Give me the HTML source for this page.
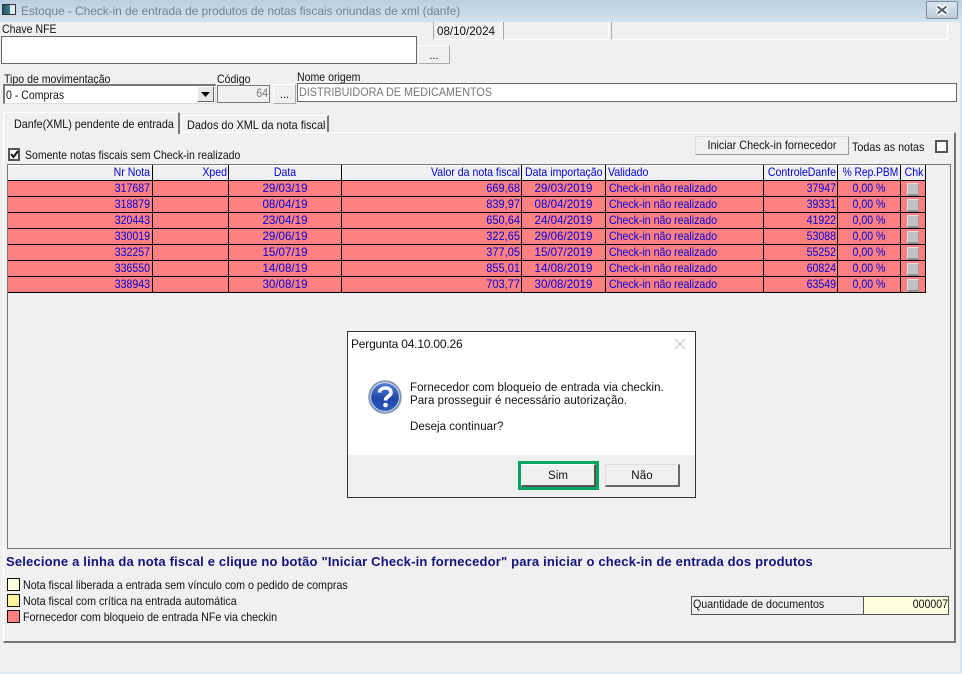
<!DOCTYPE html>
<html lang="pt"><head><meta charset="utf-8"><title>Estoque</title>
<style>
html,body{margin:0;padding:0;background:#f0f0f0}
#r{position:relative;width:962px;height:674px;overflow:hidden;background:#f0f0f0;font:12px "Liberation Sans",sans-serif;color:#111}
#r div{position:absolute;box-sizing:border-box}
.t,.c{white-space:nowrap;transform:scaleX(var(--s,.88));transform-origin:0 50%}
.t{line-height:14px;height:14px}
.c{color:#0000e0;line-height:15px;height:15px}
.ra{transform-origin:100% 50%;text-align:right}
.ce{transform-origin:50% 50%;text-align:center}
.d{--s:.965}
.n{--s:.92}
.bv{background:#fff;border:1px solid #666}
.btn{background:#f0f0f0;border:1px solid;border-color:#fff #888 #888 #fff;text-align:center;font-size:11px}
.l{background:#000}
.chk{width:12px;height:13px;background:#c0c0c0;border-bottom:2px solid #8e8e8e;border-right:1px solid #9a9a9a;border-top:1px solid #ddd;border-left:1px solid #ddd}
</style></head><body><div id="r">

<div style="left:0;top:0;width:962px;height:22px;background:linear-gradient(#b9cfe2,#d2e3f1)"></div>
<div style="left:960px;top:22px;width:2px;height:652px;background:#d2e3f1"></div>
<div style="left:0;top:672px;width:962px;height:2px;background:#dfeaf3"></div>
<div style="left:2px;top:4px;width:14px;height:11px;background:linear-gradient(90deg,#1d5c6e,#3a7c8c 60%,#dfe9ee 60%);border:1px solid #333"></div>
<div class="t" style="--s:1;left:21px;top:4px;font-size:12px;color:#7a8288;letter-spacing:-.07px">Estoque - Check-in de entrada de produtos de notas fiscais oriundas de xml (danfe)</div>
<div style="left:926px;top:1px;width:32px;height:18px;background:linear-gradient(#dbe6f0,#b9cbdc);border:1px solid #7d8ea0;border-radius:2px"></div>
<svg style="position:absolute;left:934px;top:4px" width="16" height="12"><path d="M3 2 L13 10 M13 2 L3 10" stroke="#fff" stroke-width="5"/><path d="M3.5 2.5 L12.5 9.5 M12.5 2.5 L3.5 9.5" stroke="#56606a" stroke-width="2"/></svg>

<div class="t" style="left:2px;top:22px">Chave NFE</div>
<div class="bv" style="left:1px;top:36px;width:416px;height:28px"></div>
<div class="btn" style="left:418px;top:45px;width:32px;height:19px;line-height:20px;border-color:#fff #aaa #aaa #fff">...</div>

<div style="left:433px;top:22px;width:68px;height:18px;border-left:1px solid #aaa;border-right:1px solid #fff;border-bottom:1px solid #fff"></div>
<div class="t d" style="left:437px;top:24px">08/10/2024</div>
<div style="left:503px;top:22px;width:106px;height:18px;border-left:1px solid #aaa;border-right:1px solid #fff;border-bottom:1px solid #fff"></div>
<div style="left:611px;top:22px;width:337px;height:18px;border-left:1px solid #aaa;border-right:1px solid #fff;border-bottom:1px solid #fff"></div>

<div class="t" style="left:4px;top:72px">Tipo de movimentação</div>
<div style="left:3px;top:84px;width:213px;height:20px;background:#fff;border:1px solid #777;border-top:2px solid #777;border-left:2px solid #777;border-bottom:1px solid #ddd;border-right:1px solid #ddd"></div>
<div class="t" style="left:6px;top:88px">0 - Compras</div>
<div style="left:197px;top:86px;width:17px;height:16px;background:#e8e8e8;border:1px solid;border-color:#fff #666 #666 #fff"></div>
<svg style="position:absolute;left:201px;top:92px" width="10" height="5"><path d="M0 0H9L4.5 5Z" fill="#000"/></svg>

<div class="t" style="left:217px;top:72px">Código</div>
<div style="left:217px;top:85px;width:53px;height:18px;background:#f0f0f0;border:1px solid #777"></div>
<div class="t ra" style="left:219px;top:86px;width:49px;color:#777">64</div>
<div class="btn" style="left:273px;top:84px;width:23px;height:20px;line-height:21px;border-color:#fff #aaa #aaa #fff">...</div>
<div class="t" style="left:297px;top:70px">Nome origem</div>
<div style="left:297px;top:83px;width:660px;height:19px;background:#fff;border:1px solid #666"></div>
<div class="t" style="--s:.9;left:299px;top:85px;color:#777">DISTRIBUIDORA DE MEDICAMENTOS</div>

<!-- tab page -->
<div style="left:3px;top:132px;width:953px;height:511px;border:1px solid;border-color:#fff #777 #777 #fff;border-width:1px 2px 2px 1px"></div>
<div style="left:3px;top:112px;width:177px;height:22px;background:#f0f0f0;border-top:1px solid #fff;border-left:1px solid #fff;border-right:2px solid #777;border-radius:2px 2px 0 0"></div>
<div class="t" style="--s:.894;left:14px;top:117px">Danfe(XML) pendente de entrada</div>
<div style="left:181px;top:115px;width:148px;height:17px;border-top:1px solid #fff;border-left:1px solid #fff;border-right:2px solid #777"></div>
<div class="t" style="--s:.905;left:187px;top:118px">Dados do XML da nota fiscal</div>

<div style="left:8px;top:148px;width:12px;height:13px;background:#fff;border:2px solid #555"></div>
<svg style="position:absolute;left:9px;top:149px" width="11" height="11"><path d="M2 5 L4.5 8 L9 2" fill="none" stroke="#111" stroke-width="2"/></svg>
<div class="t" style="--s:.875;left:25px;top:148px">Somente notas fiscais sem Check-in realizado</div>

<div class="btn" style="left:695px;top:136px;width:154px;height:19px;background:#f0f0f0;border-color:#ddd #999 #999 #ddd"></div>
<div class="t ce" style="--s:.9;left:695px;top:138px;width:154px">Iniciar Check-in fornecedor</div>
<div class="t" style="--s:.897;left:852px;top:140px">Todas as notas</div>
<div style="left:935px;top:140px;width:13px;height:13px;background:#fff;border:2px solid #555"></div>

<!-- grid -->
<div style="left:7px;top:164px;width:944px;height:385px;border:1px solid #777;background:#f0f0f0"></div>
<div style="left:8px;top:165px;width:918px;height:1px;background:#fff"></div>
<div style="left:8px;top:181px;width:918px;height:112px;background:#ff8080"></div>

<div class="l" style="left:8px;top:180px;width:918px;height:1px"></div>
<div class="l" style="left:8px;top:196px;width:918px;height:1px"></div>
<div class="l" style="left:8px;top:212px;width:918px;height:1px"></div>
<div class="l" style="left:8px;top:228px;width:918px;height:1px"></div>
<div class="l" style="left:8px;top:244px;width:918px;height:1px"></div>
<div class="l" style="left:8px;top:260px;width:918px;height:1px"></div>
<div class="l" style="left:8px;top:276px;width:918px;height:1px"></div>
<div class="l" style="left:8px;top:292px;width:918px;height:1px"></div>

<div class="l" style="left:152px;top:165px;width:1px;height:128px"></div>
<div class="l" style="left:228px;top:165px;width:1px;height:128px"></div>
<div class="l" style="left:341px;top:165px;width:1px;height:128px"></div>
<div class="l" style="left:521px;top:165px;width:1px;height:128px"></div>
<div class="l" style="left:605px;top:165px;width:1px;height:128px"></div>
<div class="l" style="left:763px;top:165px;width:1px;height:128px"></div>
<div class="l" style="left:837px;top:165px;width:1px;height:128px"></div>
<div class="l" style="left:900px;top:165px;width:1px;height:128px"></div>
<div class="l" style="left:925px;top:165px;width:1px;height:128px"></div>

<div class="c ra" style="left:8px;top:165px;width:142px">Nr Nota</div>
<div class="c ra" style="left:153px;top:165px;width:74px">Xped</div>
<div class="c ce" style="left:229px;top:165px;width:112px">Data</div>
<div class="c ra" style="left:342px;top:165px;width:178px">Valor da nota fiscal</div>
<div class="c" style="left:525px;top:165px">Data importação</div>
<div class="c" style="left:608px;top:165px">Validado</div>
<div class="c ra" style="left:736px;top:165px;width:100px">ControleDanfe</div>
<div class="c ce" style="--s:.85;left:838px;top:165px;width:62px">% Rep.PBM</div>
<div class="c ce" style="left:902px;top:165px;width:24px">Chk</div>

<div class="c ra" style="left:8px;top:181px;width:142px">317687</div><div class="c ce d" style="left:229px;top:181px;width:112px">29/03/19</div><div class="c ra n" style="left:342px;top:181px;width:178px">669,68</div><div class="c ce d" style="left:522px;top:181px;width:83px">29/03/2019</div><div class="c" style="left:609px;top:181px">Check-in não realizado</div><div class="c ra" style="left:764px;top:181px;width:72px">37947</div><div class="c ce" style="left:838px;top:181px;width:62px">0,00 %</div><div class="chk" style="left:907px;top:183px"></div>
<div class="c ra" style="left:8px;top:197px;width:142px">318879</div><div class="c ce d" style="left:229px;top:197px;width:112px">08/04/19</div><div class="c ra n" style="left:342px;top:197px;width:178px">839,97</div><div class="c ce d" style="left:522px;top:197px;width:83px">08/04/2019</div><div class="c" style="left:609px;top:197px">Check-in não realizado</div><div class="c ra" style="left:764px;top:197px;width:72px">39331</div><div class="c ce" style="left:838px;top:197px;width:62px">0,00 %</div><div class="chk" style="left:907px;top:199px"></div>
<div class="c ra" style="left:8px;top:213px;width:142px">320443</div><div class="c ce d" style="left:229px;top:213px;width:112px">23/04/19</div><div class="c ra n" style="left:342px;top:213px;width:178px">650,64</div><div class="c ce d" style="left:522px;top:213px;width:83px">24/04/2019</div><div class="c" style="left:609px;top:213px">Check-in não realizado</div><div class="c ra" style="left:764px;top:213px;width:72px">41922</div><div class="c ce" style="left:838px;top:213px;width:62px">0,00 %</div><div class="chk" style="left:907px;top:215px"></div>
<div class="c ra" style="left:8px;top:229px;width:142px">330019</div><div class="c ce d" style="left:229px;top:229px;width:112px">29/06/19</div><div class="c ra n" style="left:342px;top:229px;width:178px">322,65</div><div class="c ce d" style="left:522px;top:229px;width:83px">29/06/2019</div><div class="c" style="left:609px;top:229px">Check-in não realizado</div><div class="c ra" style="left:764px;top:229px;width:72px">53088</div><div class="c ce" style="left:838px;top:229px;width:62px">0,00 %</div><div class="chk" style="left:907px;top:231px"></div>
<div class="c ra" style="left:8px;top:245px;width:142px">332257</div><div class="c ce d" style="left:229px;top:245px;width:112px">15/07/19</div><div class="c ra n" style="left:342px;top:245px;width:178px">377,05</div><div class="c ce d" style="left:522px;top:245px;width:83px">15/07/2019</div><div class="c" style="left:609px;top:245px">Check-in não realizado</div><div class="c ra" style="left:764px;top:245px;width:72px">55252</div><div class="c ce" style="left:838px;top:245px;width:62px">0,00 %</div><div class="chk" style="left:907px;top:247px"></div>
<div class="c ra" style="left:8px;top:261px;width:142px">336550</div><div class="c ce d" style="left:229px;top:261px;width:112px">14/08/19</div><div class="c ra n" style="left:342px;top:261px;width:178px">855,01</div><div class="c ce d" style="left:522px;top:261px;width:83px">14/08/2019</div><div class="c" style="left:609px;top:261px">Check-in não realizado</div><div class="c ra" style="left:764px;top:261px;width:72px">60824</div><div class="c ce" style="left:838px;top:261px;width:62px">0,00 %</div><div class="chk" style="left:907px;top:263px"></div>
<div class="c ra" style="left:8px;top:277px;width:142px">338943</div><div class="c ce d" style="left:229px;top:277px;width:112px">30/08/19</div><div class="c ra n" style="left:342px;top:277px;width:178px">703,77</div><div class="c ce d" style="left:522px;top:277px;width:83px">30/08/2019</div><div class="c" style="left:609px;top:277px">Check-in não realizado</div><div class="c ra" style="left:764px;top:277px;width:72px">63549</div><div class="c ce" style="left:838px;top:277px;width:62px">0,00 %</div><div class="chk" style="left:907px;top:279px"></div>

<!-- footer -->
<div class="t" style="--s:1;left:6px;top:555px;font-weight:bold;font-size:13px;color:#12127e;letter-spacing:.18px">Selecione a linha da nota fiscal e clique no botão "Iniciar Check-in fornecedor" para iniciar o check-in de entrada dos produtos</div>
<div style="left:7px;top:578px;width:13px;height:13px;background:#ffffe0;border:1px solid #111"></div>
<div class="t" style="--s:.89;left:23px;top:578px">Nota fiscal liberada a entrada sem vínculo com o pedido de compras</div>
<div style="left:7px;top:594px;width:13px;height:13px;background:#fff39c;border:1px solid #111"></div>
<div class="t" style="--s:.89;left:23px;top:594px">Nota fiscal com crítica na entrada automática</div>
<div style="left:7px;top:610px;width:13px;height:13px;background:#ff8080;border:1px solid #111"></div>
<div class="t" style="--s:.89;left:23px;top:610px">Fornecedor com bloqueio de entrada NFe via checkin</div>

<div style="left:691px;top:596px;width:173px;height:19px;border:1px solid #555"></div>
<div class="t" style="--s:.89;left:693px;top:597px">Quantidade de documentos</div>
<div style="left:863px;top:596px;width:86px;height:19px;background:#ffffe0;border:1px solid #555"></div>
<div class="t ra" style="left:865px;top:597px;width:83px">000007</div>

<!-- dialog -->
<div style="left:347px;top:331px;width:349px;height:167px;background:#fff;border:1px solid #333"></div>
<div style="left:348px;top:455px;width:347px;height:42px;background:#f0f0f0"></div>
<div class="t" style="--s:1;left:351px;top:337px;font-size:12px;letter-spacing:-.2px;color:#111">Pergunta 04.10.00.26</div>
<svg style="position:absolute;left:674px;top:338px" width="12" height="12"><path d="M1 1 L11 11 M11 1 L1 11" stroke="#c4c4c4" stroke-width="1.1"/></svg>
<svg style="position:absolute;left:368px;top:380px" width="34" height="34" viewBox="0 0 34 34">
<defs><linearGradient id="g" x1="0" y1="0" x2="0" y2="1"><stop offset="0" stop-color="#5a86d8"/><stop offset=".55" stop-color="#1f48a8"/><stop offset="1" stop-color="#2e5fc0"/></linearGradient></defs>
<circle cx="17" cy="17" r="16" fill="url(#g)" stroke="#8d9db0" stroke-width="1.6"/>
<circle cx="17" cy="17" r="14.4" fill="none" stroke="#dfe6f0" stroke-width="1"/>
<path d="M11.5 12.5 C12 6.5 23 6.5 23 12.5 C23 16.5 17.5 16 17.5 20.5" fill="none" stroke="#fff" stroke-width="3.6"/>
<circle cx="17.5" cy="25" r="2.3" fill="#fff"/></svg>
<div class="t" style="--s:1;left:410px;top:381px;font-size:11.5px;letter-spacing:.04px;color:#111">Fornecedor com bloqueio de entrada via checkin.</div>
<div class="t" style="--s:1;left:410px;top:394px;font-size:11.5px;letter-spacing:.04px;color:#111">Para prosseguir é necessário autorização.</div>
<div class="t" style="--s:1;left:410px;top:420px;font-size:11.5px;letter-spacing:.04px;color:#111">Deseja continuar?</div>
<div style="left:518px;top:461px;width:81px;height:29px;background:#00a562"></div>
<div style="left:521px;top:464px;width:75px;height:23px;background:#f0f0f0;border:1px solid;border-color:#fff #555 #555 #fff;border-width:1px 2px 2px 1px;text-align:center;line-height:22px;font-size:11.5px;letter-spacing:.1px">Sim</div>
<div style="left:605px;top:464px;width:75px;height:23px;background:#f0f0f0;border:1px solid;border-color:#ddd #666 #666 #ddd;border-width:1px 2px 2px 1px;text-align:center;line-height:22px;font-size:11.5px;letter-spacing:.1px">Não</div>

</div></body></html>
